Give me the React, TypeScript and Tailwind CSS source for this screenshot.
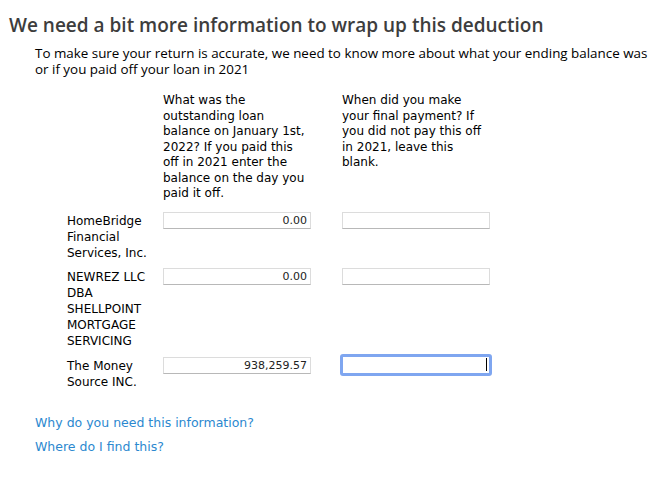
export default function App() {
  const rows = [
    { name: "HomeBridge Financial Services, Inc.", balance: "0.00", focused: false },
    { name: "NEWREZ LLC DBA SHELLPOINT MORTGAGE SERVICING", balance: "0.00", focused: false },
    { name: "The Money Source INC.", balance: "938,259.57", focused: true },
  ];

  return (
    <div className="min-h-screen bg-white text-black" style={{ fontFamily: '"DejaVu Sans", sans-serif' }}>
      <h1 className="pl-[9px] pt-[13px] text-[19px] font-semibold leading-[24px] text-[#3d3d3d]" style={{ fontFamily: '"Open Sans", sans-serif' }}>
        We need a bit more information to wrap up this deduction
      </h1>

      <p className="mt-[8px] pl-[35px] pr-2 text-[13.4px] leading-[16px] text-black" style={{ fontFamily: '"Open Sans", sans-serif' }}>
        To make sure your return is accurate, we need to know more about what your ending balance was or if you paid off your loan in 2021
      </p>

      <div className="mt-[16px] ml-[67px] grid grid-cols-[96px_179px_148px] text-[12px] leading-[15.5px]">
        <div />
        <div className="w-[148px] pr-1">
          What was the outstanding loan balance on January 1st, 2022? If you paid this off in 2021 enter the balance on the day you paid it off.
        </div>
        <div>
          When did you make your final payment? If you did not pay this off in 2021, leave this blank.
        </div>
      </div>

      <div className="mt-[10px] ml-[67px] flex flex-col gap-[7.5px]">
        {rows.map((r) => (
          <div key={r.name} className="grid grid-cols-[96px_179px_148px] text-[12px] leading-[16px]">
            <div className="pr-[10px] pt-[1px]">{r.name}</div>
            <div className="h-[17px] w-[148px] border border-[#dcdcdc] border-b-[#b8b8b8] bg-white pr-[3px] text-right text-[11px] leading-[15px] text-[#222]">
              {r.balance}
            </div>
            {r.focused ? (
              <div className="-ml-[2px] -mt-[3px] h-[22px] w-[152px] rounded-[3px] border-[3px] border-[#7fa6f0] bg-white">
                <div className="ml-auto mr-[2px] mt-[1px] h-[13px] w-[1px] bg-black" />
              </div>
            ) : (
              <div className="h-[17px] border border-[#dcdcdc] border-b-[#b8b8b8] bg-white" />
            )}
          </div>
        ))}
      </div>

      <div className="mt-[25px] flex flex-col gap-[8px] pl-[35px] text-[12.5px] leading-[16px] text-[#2b88cf]">
        <a href="#" className="w-fit">Why do you need this information?</a>
        <a href="#" className="w-fit">Where do I find this?</a>
      </div>
    </div>
  );
}
